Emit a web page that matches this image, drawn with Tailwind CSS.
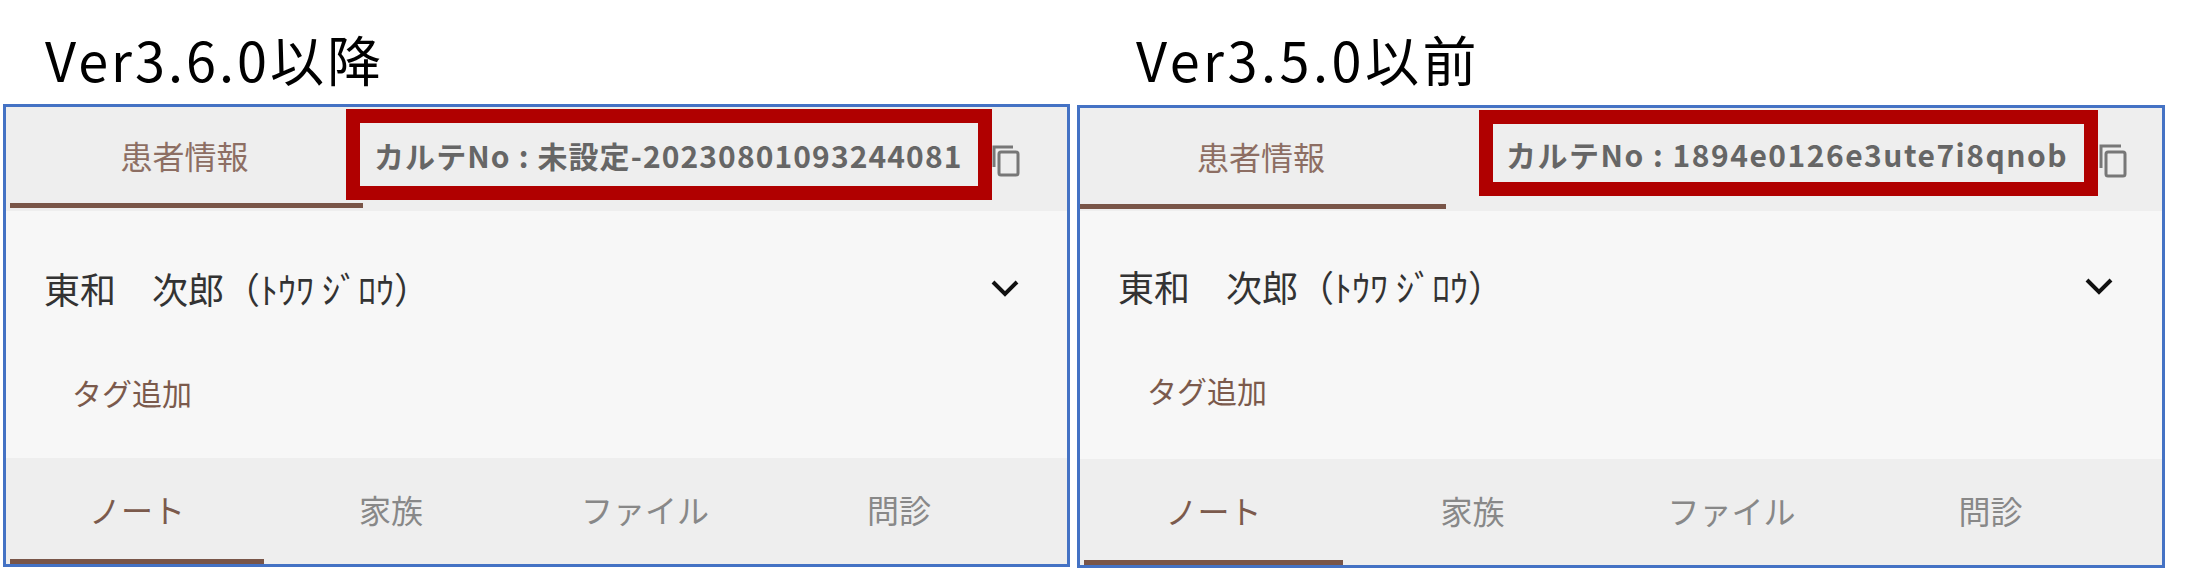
<!DOCTYPE html>
<html lang="ja">
<head>
  <meta charset="UTF-8" />
  <title>カルテNo</title>
  <script src="https://cdn.jsdelivr.net/npm/@tailwindcss/browser@4"></script>
</head>
<body class="bg-white font-['Noto_Sans_CJK_JP','Noto_Sans',sans-serif] w-[2191px] h-[582px] overflow-hidden">
  <div class="flex pl-[3px] gap-[7px]">

    <!-- Ver3.6.0 -->
    <section class="w-[1067px]">
      <h2 class="h-[104px] pl-[42px] pt-[27px] text-[54px] leading-[64px] tracking-[3px] text-black whitespace-nowrap">Ver3.6.0以降</h2>
      <div class="h-[463px] border-[3px] border-[#4472c4] bg-[#f7f7f7] flex flex-col">
        <header class="h-[104px] bg-[#eeeeee] flex items-center">
          <div class="w-[357px] h-full pl-[4px] pb-[3px]">
            <div class="h-full flex items-center justify-center border-b-[5px] border-[#795548] text-[32px] text-[#8d6e63] pr-[4px]">患者情報</div>
          </div>
          <div class="ml-[-17px] h-[91px] w-[646px] mb-[10px] border-[14px] border-[#b00000] flex items-center pl-[14px] pt-[3px] text-[30px] tracking-[1.1px] font-semibold text-[#666] whitespace-nowrap">カルテNo : 未設定-20230801093244081</div>
          <svg class="w-[28px] h-[32px] mb-[-4px]" viewBox="0 0 28 32" fill="none" stroke="#777" stroke-width="3"><path d="M2 22V2h19"/><rect x="7" y="7" width="19" height="23" rx="2"/></svg>
        </header>
        <div class="flex-1 flex flex-col pl-[38px] pr-[48px]">
          <div class="h-[154px] flex items-center justify-between">
            <span class="text-[36px] text-[#333] whitespace-nowrap">東和　次郎（ﾄｳﾜ ｼﾞﾛｳ）</span>
            <svg class="w-[28px] h-[17px]" viewBox="0 0 28 17" fill="none" stroke="#111" stroke-width="4"><path d="M2 2l12 12L26 2"/></svg>
          </div>
          <div class="pl-[28px] pt-[7px] text-[30px] text-[#7b5a4c] leading-[40px]">タグ追加</div>
        </div>
        <nav class="h-[106px] bg-[#eeeeee] grid grid-cols-[254px_254px_254px_254px] pl-[4px] text-[32px] text-[#888]">
          <div class="flex items-center justify-center border-b-[5px] border-[#795548] text-[#7b5a4c]">ノート</div>
          <div class="flex items-center justify-center pb-[5px]">家族</div>
          <div class="flex items-center justify-center pb-[5px]">ファイル</div>
          <div class="flex items-center justify-center pb-[5px]">問診</div>
        </nav>
      </div>
    </section>

    <!-- Ver3.5.0 -->
    <section class="w-[1088px]">
      <h2 class="h-[105px] pl-[59px] pt-[27px] text-[54px] leading-[64px] tracking-[3.5px] text-black whitespace-nowrap">Ver3.5.0以前</h2>
      <div class="h-[463px] border-[3px] border-[#4472c4] bg-[#f7f7f7] flex flex-col">
        <header class="h-[103px] bg-[#eeeeee] flex items-center">
          <div class="w-[366px] h-full pb-[2px]">
            <div class="h-full flex items-center justify-center border-b-[5px] border-[#795548] text-[32px] text-[#8d6e63] pr-[4px]">患者情報</div>
          </div>
          <div class="ml-[33px] h-[86px] w-[619px] mb-[14px] border-[14px] border-[#b00000] flex items-center pl-[13px] pt-[3px] text-[30px] tracking-[1.5px] font-semibold text-[#666] whitespace-nowrap">カルテNo : 1894e0126e3ute7i8qnob</div>
          <svg class="ml-[1px] w-[28px] h-[34px] mb-[-2px]" viewBox="0 0 28 34" fill="none" stroke="#777" stroke-width="3"><path d="M2 24V2h20"/><rect x="7" y="8" width="19" height="24" rx="2"/></svg>
        </header>
        <div class="flex-1 flex flex-col pl-[38px] pr-[49px]">
          <div class="h-[152px] flex items-center justify-between pb-[2px]">
            <span class="text-[36px] text-[#333] whitespace-nowrap">東和　次郎（ﾄｳﾜ ｼﾞﾛｳ）</span>
            <svg class="w-[28px] h-[17px]" viewBox="0 0 28 17" fill="none" stroke="#111" stroke-width="4"><path d="M2 2l12 12L26 2"/></svg>
          </div>
          <div class="pl-[29px] pt-[7px] text-[30px] text-[#7b5a4c] leading-[40px]">タグ追加</div>
        </div>
        <nav class="h-[106px] bg-[#eeeeee] grid grid-cols-[259px_259px_259px_259px] pl-[4px] text-[32px] text-[#888]">
          <div class="flex items-center justify-center border-b-[5px] border-[#795548] text-[#7b5a4c]">ノート</div>
          <div class="flex items-center justify-center pb-[5px]">家族</div>
          <div class="flex items-center justify-center pb-[5px]">ファイル</div>
          <div class="flex items-center justify-center pb-[5px]">問診</div>
        </nav>
      </div>
    </section>
  </div>
</body>
</html>
